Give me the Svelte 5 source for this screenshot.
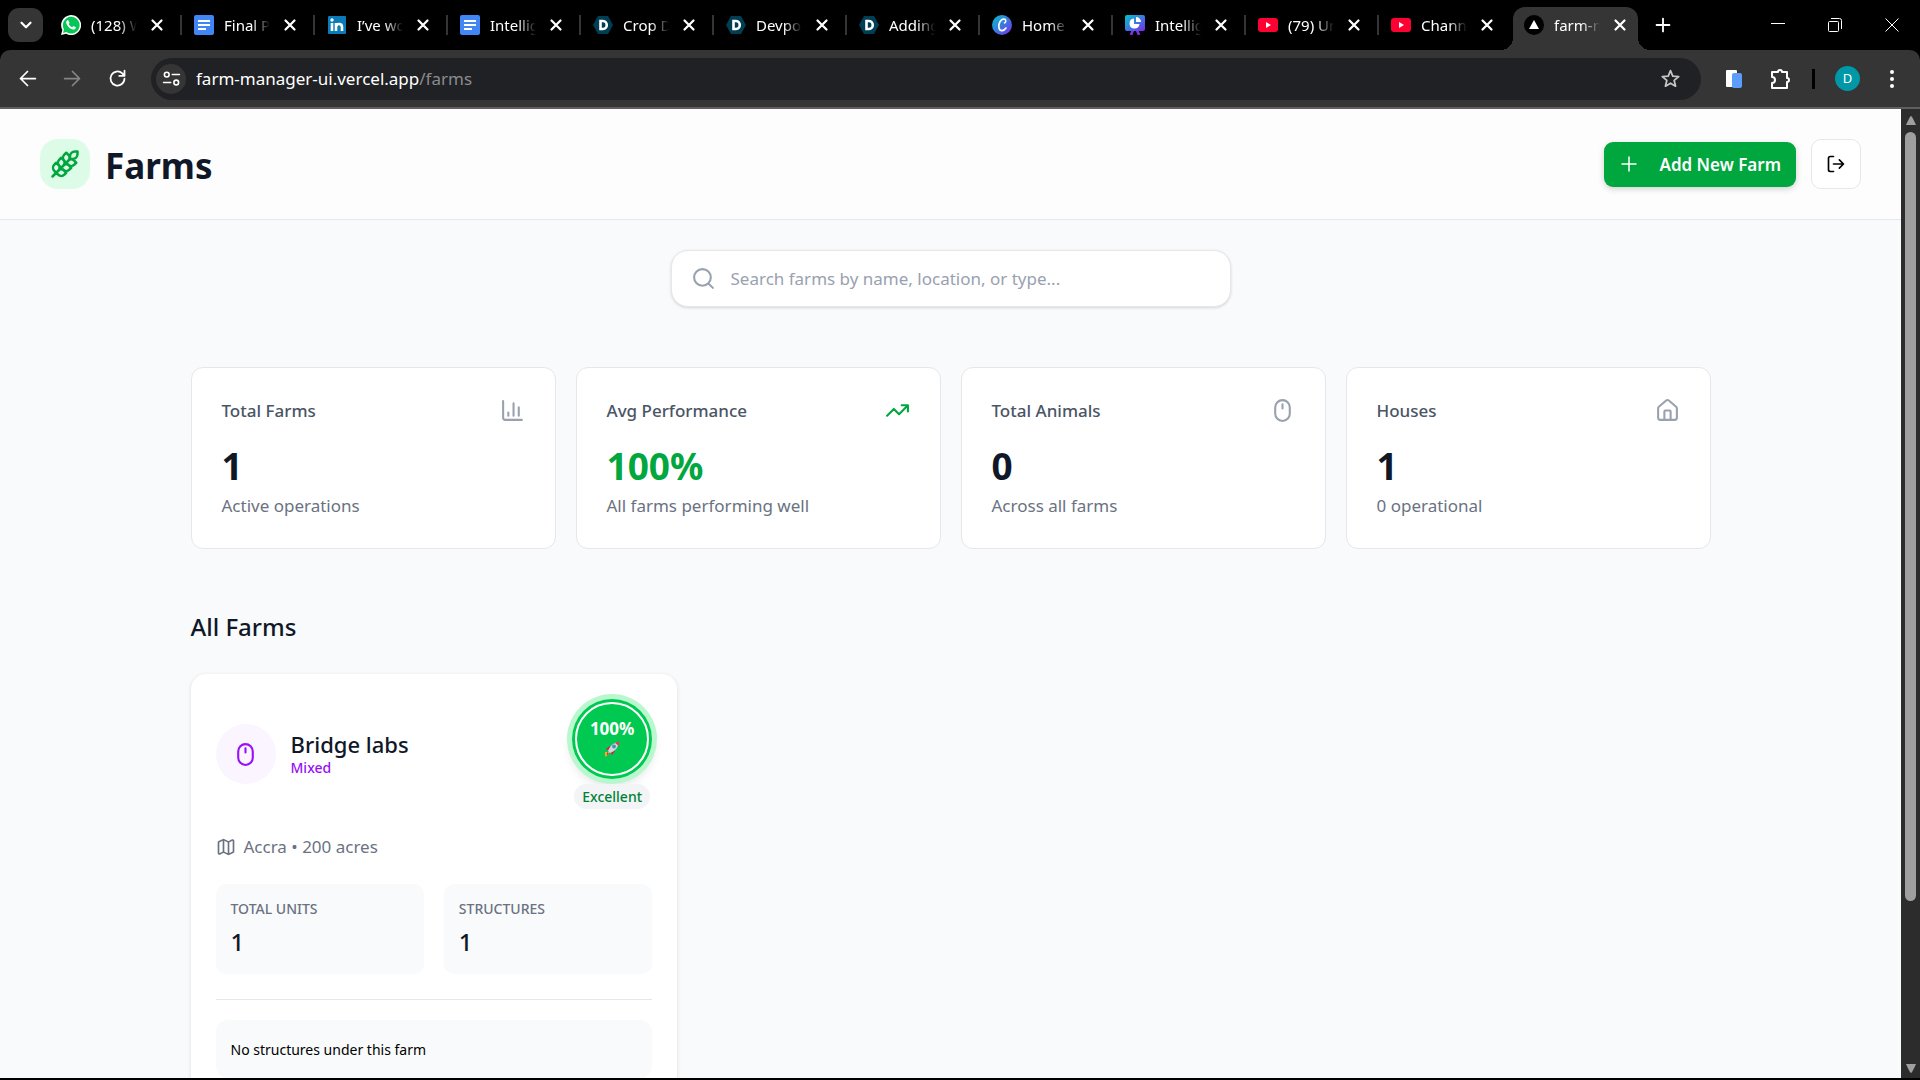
<script>
    let search = '';

    const tabs = [
        { icon: 'whatsapp', title: '(128) W' },
        { icon: 'docs', title: 'Final Pr' },
        { icon: 'linkedin', title: 'I’ve wo' },
        { icon: 'docs', title: 'Intellig' },
        { icon: 'devpost', title: 'Crop D' },
        { icon: 'devpost', title: 'Devpo' },
        { icon: 'devpost', title: 'Adding' },
        { icon: 'canva', title: 'Home' },
        { icon: 'deck', title: 'Intellig' },
        { icon: 'youtube', title: '(79) Ur' },
        { icon: 'youtube', title: 'Chann' },
        { icon: 'vercel', title: 'farm-n', active: true },
    ];

    const stats = [
        { title: 'Total Farms', value: '1', note: 'Active operations', icon: 'chart' },
        { title: 'Avg Performance', value: '100%', note: 'All farms performing well', icon: 'trend', good: true },
        { title: 'Total Animals', value: '0', note: 'Across all farms', icon: 'mouse' },
        { title: 'Houses', value: '1', note: '0 operational', icon: 'house' },
    ];

    const farms = [
        { name: 'Bridge labs', type: 'Mixed', place: 'Accra', acres: 200, score: 100, rating: 'Excellent', units: 1, structures: 1 },
    ];

    // 24x24 stroke icons
    const icons = {
        wheat: 'M2 22 16 8M3.47 12.53 5 11l1.53 1.53a3.5 3.5 0 0 1 0 4.94L5 19l-1.53-1.53a3.5 3.5 0 0 1 0-4.94ZM7.47 8.53 9 7l1.53 1.53a3.5 3.5 0 0 1 0 4.94L9 15l-1.53-1.53a3.5 3.5 0 0 1 0-4.94ZM11.47 4.53 13 3l1.53 1.53a3.5 3.5 0 0 1 0 4.94L13 11l-1.53-1.53a3.5 3.5 0 0 1 0-4.94ZM20 2h2v2a4 4 0 0 1-4 4h-2V6a4 4 0 0 1 4-4ZM11.47 17.47 13 19l-1.53 1.53a3.5 3.5 0 0 1-4.94 0L5 19l1.53-1.53a3.5 3.5 0 0 1 4.94 0ZM15.47 13.47 17 15l-1.53 1.53a3.5 3.5 0 0 1-4.94 0L9 15l1.53-1.53a3.5 3.5 0 0 1 4.94 0ZM19.47 9.47 21 11l-1.53 1.53a3.5 3.5 0 0 1-4.94 0L13 11l1.53-1.53a3.5 3.5 0 0 1 4.94 0Z',
        plus: 'M5 12h14M12 5v14',
        logout: 'M9 21H5a2 2 0 0 1-2-2V5a2 2 0 0 1 2-2h4M16 17l5-5-5-5M21 12H9',
        search: 'M21 21l-4.3-4.3M19 11a8 8 0 1 1-16 0 8 8 0 0 1 16 0Z',
        chart: 'M3 3v16a2 2 0 0 0 2 2h16M18 17V9M13 17V5M8 17v-3',
        trend: 'M16 7h6v6M22 7l-8.500 8.500-5-5L2 17',
        mouse: 'M12 2a7 7 0 0 1 7 7v6a7 7 0 0 1-14 0V9a7 7 0 0 1 7-7ZM12 6v4',
        house: 'M15 21v-8a1 1 0 0 0-1-1h-4a1 1 0 0 0-1 1v8M3 10a2 2 0 0 1 .709-1.528l7-5.999a2 2 0 0 1 2.582 0l7 5.999A2 2 0 0 1 21 10v9a2 2 0 0 1-2 2H5a2 2 0 0 1-2-2z',
        map: 'M14.106 5.553a2 2 0 0 0 1.788 0l3.659-1.83A1 1 0 0 1 21 4.619v12.764a1 1 0 0 1-.553.894l-4.553 2.277a2 2 0 0 1-1.788 0l-4.212-2.106a2 2 0 0 0-1.788 0l-3.659 1.83A1 1 0 0 1 3 19.381V6.618a1 1 0 0 1 .553-.894l4.553-2.277a2 2 0 0 1 1.788 0zM15 5.764v15M9 3.236v15',
        down: 'M6 9l6 6 6-6',
        close: 'M6 6l12 12M18 6L6 18',
        back: 'M21 12H4M12 4l-8 8 8 8',
        forward: 'M3 12h17M12 4l8 8-8 8',
        reload: 'M20 12a8 8 0 1 1-2.500-5.800L20 9M20 3v6h-6',
        tune: 'M3 7a3 3 0 1 0 6 0 3 3 0 1 0-6 0M13 7h9M2 17h9M15 17a3 3 0 1 0 6 0 3 3 0 1 0-6 0',
        star: 'M12 3l2.600 6.300 6.800.500-5.200 4.400 1.600 6.600L12 17.300l-5.800 3.500 1.600-6.600-5.200-4.400 6.800-.500Z',
        puzzle: 'M4 5h6a2 2 0 1 1 4 0h5v6a2 2 0 1 1 0 4v6H4v-5a3 3 0 0 0 0-6Z',
    };

    $: found = farms.filter((f) => (f.name + f.place + f.type).toLowerCase().includes(search.toLowerCase()));
</script>

<svelte:head>
    <title>Farms</title>
</svelte:head>

{#snippet icon(name, size, stroke = 2)}
    <svg class="icon" width={size} height={size} viewBox="0 0 24 24" stroke-width={stroke} aria-hidden="true">
        <path d={icons[name]} />
    </svg>
{/snippet}

{#snippet favicon(name)}
    <svg class="favicon" viewBox="0 0 20 20" aria-hidden="true">
        {#if name === 'whatsapp'}
            <path fill="#fff" d="M0 20l1.400-5A10 10 0 1 1 5 18.700Z" />
            <path fill="#06c755" d="M2 18l1-3.600A8.400 8.400 0 1 1 5.400 17Z" />
            <path fill="#fff" d="M7 5c-.800 0-1.800 1-1.800 2.400 0 2.500 4 7 7 7.100 1.600 0 2.600-.900 2.700-2.300l-2.500-1.300-1.200 1.300c-1.500-.500-2.800-1.700-3.500-3.200l.900-1.200Z" />
        {:else if name === 'docs'}
            <rect width="20" height="20" rx="2" fill="#4285f4" />
            <path stroke="#fff" stroke-width="2" d="M4 6h12M4 10h12M4 14h8" />
        {:else if name === 'linkedin'}
            <rect x="1" y="1" width="18" height="18" rx="1" fill="#0a7ab8" />
            <circle cx="5" cy="5" r="1.700" fill="#fff" />
            <path fill="none" stroke="#fff" stroke-width="2.600" d="M5 8v8M9 8v8M9 12c0-4 6-4 6 0v4" />
        {:else if name === 'devpost'}
            <path fill="#003e54" d="M5 1h10l5 9-5 9H5l-5-9Z" />
            <path fill="none" stroke="#fff" stroke-width="2.600" d="M7.500 6v8H10c5 0 5-8 0-8Z" />
        {:else if name === 'canva'}
            <circle cx="10" cy="10" r="10" fill="url(#canva)" />
            <path fill="none" stroke="#fff" stroke-width="1.600" stroke-linecap="round" d="M12.500 8c2-1 1.500-4-.5-4C8.500 4 6 9 7 13s5 3 7 0" />
        {:else if name === 'deck'}
            <path stroke="#8b2be2" stroke-width="2.600" d="M8 15l-2 5M12 15l2 5" />
            <rect width="20" height="16" rx="2" fill="url(#canva)" />
            <path fill="#fff" d="M9 3.500V9h5.500A5 5 0 1 1 9 3.500ZM11 2a5 5 0 0 1 5 5h-5Z" />
        {:else if name === 'youtube'}
            <rect y="3" width="20" height="14" rx="3" fill="#ff0033" />
            <path fill="#fff" d="M8 7l5 3-5 3Z" />
        {:else}
            <circle cx="10" cy="10" r="10" fill="#000" />
            <path fill="#fff" d="M10 5l5 9H5Z" />
        {/if}
    </svg>
{/snippet}

<svg class="defs" width="0" height="0" aria-hidden="true">
    <defs>
        <linearGradient id="canva" x1="0" y1="0" x2="1" y2="1">
            <stop offset="0" stop-color="#00c4cc" />
            <stop offset="0.5" stop-color="#3a7be0" />
            <stop offset="1" stop-color="#7d2ae8" />
        </linearGradient>
    </defs>
</svg>

<div class="window">
    <div class="tabstrip">
        <button class="tablist" aria-label="Search tabs">{@render icon('down', 18, 3)}</button>
        <div class="tabs">
            {#each tabs as tab, i}
                <div class="tab" class:active={tab.active}>
                    {@render favicon(tab.icon)}
                    <span class="tabtitle">{tab.title}</span>
                    <button class="tabclose" aria-label="Close tab">{@render icon('close', 18, 3)}</button>
                    {#if !tab.active && !tabs[i + 1].active}
                        <span class="tabline"></span>
                    {/if}
                </div>
            {/each}
        </div>
        <button class="newtab" aria-label="New tab">{@render icon('plus', 22)}</button>
        <div class="winbuttons">
            <button aria-label="Minimize"><svg width="14" height="14"><path d="M0 5.500h14" /></svg></button>
            <button aria-label="Restore"><svg width="14" height="14"><path d="M.5 4.500q0-1 1-1h8q1 0 1 1v8q0 1-1 1h-8q-1 0-1-1ZM3 .5h8.500q2 0 2 2V11" /></svg></button>
            <button aria-label="Close"><svg width="14" height="14"><path d="M.5.5l13 13M13.500.5l-13 13" /></svg></button>
        </div>
    </div>

    <div class="toolbar">
        <button class="nav" aria-label="Back">{@render icon('back', 21)}</button>
        <button class="nav dim" aria-label="Forward">{@render icon('forward', 21)}</button>
        <button class="nav" aria-label="Reload">{@render icon('reload', 21)}</button>
        <div class="omnibox">
            <button class="site" aria-label="Site information">{@render icon('tune', 19)}</button>
            <button class="url">farm-manager-ui.vercel.app<span>/farms</span></button>
            <button class="bookmark" aria-label="Bookmark">{@render icon('star', 21)}</button>
        </div>
        <div class="extras">
            <button class="ext" aria-label="Extension">
                <svg width="18" height="20" viewBox="0 0 18 20">
                    <rect x="1" y="1" width="11" height="17" rx="1" fill="#fff" />
                    <rect x="7" y="4" width="10" height="15" rx="2" fill="#5c9dfa" />
                </svg>
            </button>
            <button aria-label="Extensions">{@render icon('puzzle', 24)}</button>
            <span class="bar"></span>
            <button class="avatar">D</button>
            <button class="menu" aria-label="Menu">
                <svg width="6" height="20" viewBox="0 0 6 20" fill="#fff">
                    <circle cx="3" cy="3" r="2" /><circle cx="3" cy="10" r="2" /><circle cx="3" cy="17" r="2" />
                </svg>
            </button>
        </div>
    </div>

    <div class="view">
        <div class="page">
            <header>
                <div class="logo">{@render icon('wheat', 30)}</div>
                <h1>Farms</h1>
                <button class="add">{@render icon('plus', 24, 1.5)}Add New Farm</button>
                <button class="logout" aria-label="Log out">{@render icon('logout', 20)}</button>
            </header>

            <main>
                <label class="search">
                    {@render icon('search', 25)}
                    <input type="text" placeholder="Search farms by name, location, or type..." aria-label="Search farms" bind:value={search}>
                </label>

                <section class="stats">
                    {#each stats as stat}
                        <div class="stat" class:good={stat.good}>
                            <div class="stathead">
                                <h3>{stat.title}</h3>
                                {@render icon(stat.icon, 25)}
                            </div>
                            <p class="value">{stat.value}</p>
                            <p class="note">{stat.note}</p>
                        </div>
                    {/each}
                </section>

                <section>
                    <h2>All Farms</h2>
                    <div class="farms">
                        {#each found as farm}
                            <article class="farm">
                                <div class="farmhead">
                                    <div class="kind">{@render icon('mouse', 25)}</div>
                                    <div class="who">
                                        <h3>{farm.name}</h3>
                                        <p>{farm.type}</p>
                                    </div>
                                    <div class="rating">
                                        <div class="score">
                                            <div class="scorering">
                                                <span>{farm.score}%</span>
                                                <svg width="16" height="16" viewBox="0 0 16 16" aria-hidden="true">
                                                    <path fill="#f9a825" d="M1 11l4 0 0 2-4 3Z" />
                                                    <path fill="#d81b60" d="M2 8l4-3 1 3-2 2ZM8 14l3-4-3-1-2 2ZM3 11l2 2-2 1Z" />
                                                    <path fill="#cfd8dc" d="M4 10C6 5 9 2 14 1c1 5-3 9-8 11Z" />
                                                    <path fill="#e53950" d="M11 2l4-2 0 5Z" />
                                                    <circle cx="10" cy="5.500" r="1.900" fill="#4a90b8" />
                                                </svg>
                                            </div>
                                        </div>
                                        <span class="badge">{farm.rating}</span>
                                    </div>
                                </div>
                                <p class="place">{@render icon('map', 20)}{farm.place} • {farm.acres} acres</p>
                                <div class="counts">
                                    <div class="count"><p>TOTAL UNITS</p><strong>{farm.units}</strong></div>
                                    <div class="count"><p>STRUCTURES</p><strong>{farm.structures}</strong></div>
                                </div>
                                <hr>
                                <p class="empty">No structures under this farm</p>
                            </article>
                        {/each}
                    </div>
                </section>
            </main>
        </div>

        <div class="scrollbar">
            <svg width="12" height="23"><path d="M6 7q1 0 5 9H1Q5 7 6 7Z" /></svg>
            <div class="thumb"></div>
            <div class="track"></div>
            <svg width="12" height="23"><path d="M6 18Q5 18 1 9h10Q7 18 6 18Z" /></svg>
        </div>
    </div>
</div>

<style>
    :global(body) {
        background: #000;
        overflow: hidden;
    }

    .window {
        display: flex;
        flex-direction: column;
        height: 100vh;
        padding-bottom: 2px;
        box-sizing: border-box;
        background: #000;
        font-family: "Segoe UI", "Noto Sans", "Open Sans", sans-serif;
        font-size: 17px;
        line-height: 25px;
    }

    h1, h2, h3, p {
        margin: 0;
    }

    button {
        display: flex;
        align-items: center;
        justify-content: center;
        padding: 0;
        border: none;
        background: none;
        color: inherit;
        font: inherit;
        cursor: pointer;
    }

    .icon {
        display: block;
        flex: none;
        fill: none;
        stroke: currentColor;
        stroke-linecap: round;
        stroke-linejoin: round;
    }

    .defs {
        position: absolute;
    }

    /* browser frame */
    .tabstrip {
        display: flex;
        align-items: center;
        flex: none;
        height: 50px;
        padding-left: 8px;
        color: #fff;
        font-size: 15px;
    }

    .tablist {
        width: 35px;
        height: 34px;
        border-radius: 11px;
        background: #353535;
    }

    .tabs {
        display: flex;
        align-items: flex-end;
        align-self: stretch;
        padding-left: 6px;
    }

    .tab {
        display: flex;
        align-items: center;
        box-sizing: border-box;
        width: 133px;
        height: 43px;
        padding-left: 12px;
        padding-bottom: 7px;
    }

    .tab.active {
        position: relative;
        width: 125px;
        padding-left: 11px;
        margin-left: 1px;
        border-radius: 12px 12px 0 0;
        background: #353535;
    }

    .tab.active::before,
    .tab.active::after {
        content: "";
        position: absolute;
        bottom: 0;
        width: 12px;
        height: 12px;
    }

    .tab.active::before {
        left: -12px;
        background: radial-gradient(circle at 0 0, #000 12px, #353535 12px);
    }

    .tab.active::after {
        right: -12px;
        background: radial-gradient(circle at 100% 0, #000 12px, #353535 12px);
    }

    .favicon {
        width: 20px;
        height: 20px;
        flex: none;
    }

    .tabtitle {
        width: 46px;
        margin-left: 10px;
        white-space: nowrap;
        -webkit-mask-image: linear-gradient(to right, #000 60%, transparent);
        mask-image: linear-gradient(to right, #000 60%, transparent);
    }

    .tabclose {
        width: 20px;
        height: 20px;
        margin-left: 10px;
    }

    .tabline {
        width: 2px;
        height: 20px;
        margin-left: auto;
        background: #353535;
    }

    .newtab {
        width: 50px;
        height: 34px;
    }

    .winbuttons {
        display: flex;
        margin-left: auto;
    }

    .winbuttons button {
        width: 57px;
        height: 48px;
    }

    .winbuttons svg {
        fill: none;
        stroke: #fff;
    }

    .toolbar {
        display: flex;
        align-items: center;
        flex: none;
        height: 57px;
        padding: 0 16px;
        border-bottom: 2px solid #5f5f5f;
        border-radius: 10px 10px 0 0;
        background: #353535;
        color: #fff;
    }

    .nav {
        width: 22px;
        margin-right: 23px;
    }

    .nav.dim {
        color: #858585;
    }

    .omnibox {
        display: flex;
        align-items: center;
        flex: 1;
        height: 42px;
        padding: 0 20px 0 5px;
        margin-right: 19px;
        border-radius: 21px;
        background: #202124;
    }

    .site {
        width: 30px;
        height: 30px;
        border-radius: 50%;
        background: #353535;
    }

    .url {
        flex: 1;
        justify-content: flex-start;
        padding-left: 10px;
        cursor: text;
    }

    .url span {
        color: #8a8b8d;
    }

    .bookmark {
        color: #c7c7c7;
    }

    .extras {
        display: flex;
        align-items: center;
        gap: 20px;
    }

    .ext {
        width: 28px;
    }

    .menu {
        width: 24px;
    }

    .bar {
        width: 3px;
        height: 20px;
        background: #000;
    }

    .avatar {
        width: 25px;
        height: 25px;
        border-radius: 50%;
        background: #0097a7;
        font-size: 13px;
    }

    /* page */
    .view {
        display: flex;
        flex: 1;
        min-height: 0;
    }

    .page {
        flex: 1;
        overflow: hidden;
        background: #f9fafb;
        color: #101828;
    }

    .scrollbar {
        display: flex;
        flex-direction: column;
        align-items: center;
        width: 19px;
        background: #2c2c2c;
    }

    .scrollbar svg {
        flex: none;
        fill: #9f9f9f;
    }

    .thumb {
        flex: 5;
        width: 11px;
        border-radius: 6px;
        background: #9f9f9f;
    }

    .track {
        flex: 1;
    }

    header {
        display: flex;
        align-items: center;
        padding: 30px 40px;
        border-bottom: 1px solid #e5e7eb;
        background: #fdfdfd;
    }

    .logo {
        display: flex;
        align-items: center;
        justify-content: center;
        width: 50px;
        height: 50px;
        border-radius: 18px;
        background: #dcfce7;
        color: #00a63e;
    }

    h1 {
        flex: 1;
        margin-left: 15px;
        padding-top: 3px;
        font-size: 35px;
        font-weight: 700;
        line-height: 45px;
    }

    .add {
        gap: 18px;
        height: 45px;
        padding: 0 15px 0 13px;
        margin-right: 15px;
        border-radius: 9px;
        background: #00a63e;
        box-shadow: 0 2px 6px rgba(0, 0, 0, 0.18);
        color: #fff;
        font-weight: 600;
    }

    .logout {
        box-sizing: border-box;
        width: 50px;
        height: 50px;
        border: 1px solid #e5e7eb;
        border-radius: 10px;
        background: #fff;
        color: #000;
    }

    main {
        display: flex;
        flex-direction: column;
        gap: 60px;
        max-width: 1520px;
        padding: 30px 40px;
        margin: 0 auto;
    }

    .search {
        display: flex;
        align-items: center;
        gap: 15px;
        align-self: center;
        box-sizing: border-box;
        width: 560px;
        max-width: 100%;
        height: 57px;
        padding: 0 19px;
        border: 1px solid #e5e7eb;
        border-radius: 17px;
        background: #fff;
        box-shadow: 0 1px 3px rgba(0, 0, 0, 0.15);
        color: #99a1af;
    }

    .search input {
        flex: 1;
        padding: 0;
        border: none;
        outline: none;
        background: none;
        color: #101828;
        font: inherit;
    }

    .search input::placeholder {
        color: #99a1af;
        opacity: 1;
    }

    .stats {
        display: grid;
        grid-template-columns: repeat(4, 1fr);
        gap: 20px;
    }

    .stat {
        padding: 30px;
        border: 1px solid #e5e7eb;
        border-radius: 12px;
        background: #fff;
    }

    .stathead {
        display: flex;
        justify-content: space-between;
        color: #99a1af;
    }

    .stathead h3 {
        color: #4a5565;
        font-size: 17px;
        font-weight: 500;
    }

    .value {
        margin: 20px 0 5px;
        font-size: 37px;
        font-weight: 700;
        line-height: 45px;
    }

    .good .icon,
    .good .value {
        color: #00a63e;
    }

    .note {
        color: #6a7282;
    }

    h2 {
        margin-bottom: 30px;
        font-size: 24px;
        font-weight: 500;
        line-height: 35px;
    }

    .farms {
        display: grid;
        grid-template-columns: repeat(3, 1fr);
        gap: 30px;
    }

    .farm {
        padding: 25px;
        border-radius: 15px;
        background: #fff;
        box-shadow: 0 1px 4px rgba(0, 0, 0, 0.12);
    }

    .farmhead {
        display: flex;
        align-items: center;
    }

    .kind {
        display: flex;
        align-items: center;
        justify-content: center;
        width: 60px;
        height: 60px;
        border-radius: 50%;
        background: #faf5ff;
        color: #9810fa;
    }

    .who {
        flex: 1;
        margin-left: 15px;
    }

    .who h3 {
        font-size: 22px;
        font-weight: 500;
        line-height: 28px;
    }

    .who p {
        color: #9810fa;
        font-size: 14px;
        font-weight: 500;
        line-height: 20px;
    }

    .rating {
        display: flex;
        flex-direction: column;
        align-items: center;
        gap: 5px;
    }

    .score {
        display: flex;
        box-sizing: border-box;
        width: 80px;
        height: 80px;
        padding: 3px;
        border-radius: 50%;
        background: #00c951;
        box-shadow: 0 0 0 5px #b9f8cf, 0 6px 12px rgba(0, 0, 0, 0.15);
    }

    .scorering {
        display: flex;
        flex: 1;
        flex-direction: column;
        align-items: center;
        justify-content: center;
        padding-bottom: 5px;
        border: 2px solid #fff;
        border-radius: 50%;
        color: #fff;
        font-weight: 700;
    }

    .badge {
        padding: 0 8px;
        border-radius: 13px;
        background: #f3f4f6;
        color: #008236;
        font-size: 14px;
        font-weight: 500;
    }

    .place {
        display: flex;
        align-items: center;
        gap: 8px;
        margin: 25px 0;
        color: #6a7282;
    }

    .counts {
        display: grid;
        grid-template-columns: 1fr 1fr;
        gap: 20px;
    }

    .count {
        padding: 15px;
        border-radius: 10px;
        background: #f9fafb;
    }

    .count p {
        color: #6a7282;
        font-size: 14px;
        font-weight: 500;
        line-height: 20px;
    }

    .count strong {
        display: block;
        margin-top: 5px;
        font-size: 24px;
        font-weight: 500;
        line-height: 35px;
    }

    hr {
        margin: 25px 0 20px;
        border: none;
        border-top: 1px solid #e5e7eb;
    }

    .empty {
        padding: 20px 15px 18px;
        border-radius: 12px;
        background: #f9fafb;
        color: #000;
        font-size: 14px;
        line-height: 20px;
    }
</style>
